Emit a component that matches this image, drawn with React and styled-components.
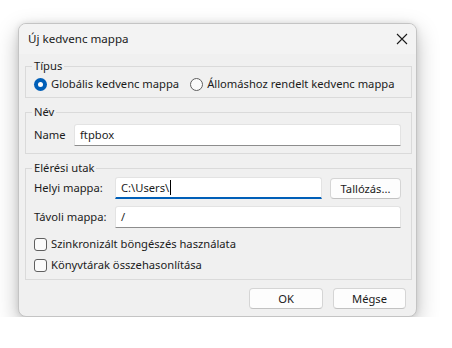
import React from "react";
import styled, { createGlobalStyle } from "styled-components";

const Global = createGlobalStyle`
  html, body {
    margin: 0;
    background: #ffffff;
  }
  body {
    font-family: "Noto Sans", "Open Sans", sans-serif;
    font-size: 11.2px;
    color: #1b1b1b;
  }
`;

const Page = styled.div`
  padding: 23px 0 0 18px;
`;

const Window = styled.div`
  width: 399px;
  height: 294px;
  box-sizing: border-box;
  background: #f0f0f0;
  border: 1px solid #c4c4c4;
  border-radius: 8px;
  box-shadow: 0 8px 22px rgba(0, 0, 0, 0.26), 0 0 6px rgba(0, 0, 0, 0.1);
  display: flex;
  flex-direction: column;
  overflow: hidden;
`;

const TitleBar = styled.div`
  height: 31px;
  display: flex;
  align-items: center;
  justify-content: space-between;
  padding: 0 7px 0 9px;
  background: #f3f3f3;
`;

const Title = styled.span`
  font-size: 11.6px;
  line-height: 16px;
  color: #1b1b1b;
`;

const CloseButton = styled.button`
  width: 14px;
  height: 14px;
  padding: 0;
  border: 0;
  background: transparent;
  display: flex;
  align-items: center;
  justify-content: center;
`;

const Content = styled.div`
  flex: 1;
  display: flex;
  flex-direction: column;
  gap: 6px;
  padding: 4px 4px 0 6px;
`;

const Group = styled.fieldset`
  margin: 0;
  padding: ${(p) => p.$top || 2}px 10px ${(p) => p.$bottom || 4}px 6px;
  border: 1px solid #dadada;
  border-radius: 0;
  min-width: 0;
`;

const Legend = styled.legend`
  padding: 0 2px;
  line-height: 16px;
  color: #1b1b1b;
`;

const RadioRow = styled.div`
  display: flex;
  align-items: center;
  gap: 11px;
  padding-left: 2px;
  height: 16px;
`;

const Choice = styled.label`
  display: flex;
  align-items: center;
  gap: 4px;
  white-space: nowrap;
  line-height: 16px;
`;

const RadioDot = styled.span`
  width: 13px;
  height: 13px;
  box-sizing: border-box;
  border-radius: 50%;
  flex: none;
  background: ${(p) => (p.$on ? "#005fb8" : "#fbfbfb")};
  border: ${(p) => (p.$on ? "0" : "1px solid #5f5f5f")};
  display: flex;
  align-items: center;
  justify-content: center;

  &::after {
    content: "";
    display: ${(p) => (p.$on ? "block" : "none")};
    width: 5px;
    height: 5px;
    border-radius: 50%;
    background: #ffffff;
  }
`;

const Box = styled.span`
  width: 13px;
  height: 13px;
  box-sizing: border-box;
  border: 1px solid #5f5f5f;
  border-radius: 3px;
  background: #fbfbfb;
  flex: none;
`;

const Field = styled.div`
  display: grid;
  grid-template-columns: ${(p) => p.$cols};
  row-gap: 7px;
  align-items: center;
  padding-left: 2px;
`;

const Label = styled.span`
  line-height: 16px;
  white-space: nowrap;
`;

const Input = styled.div`
  height: 22px;
  box-sizing: border-box;
  background: #ffffff;
  border: 1px solid #e3e3e3;
  border-bottom: ${(p) => (p.$focus ? "2px solid #005fb8" : "1px solid #8d8d8d")};
  border-radius: 3px 3px 0 0;
  padding: 0 5px;
  display: flex;
  align-items: center;
  line-height: 16px;
  grid-column: ${(p) => p.$span || "auto"};
`;

const Caret = styled.span`
  width: 1px;
  height: 15px;
  background: #000000;
  margin-left: 1px;
`;

const ButtonCell = styled.div`
  display: flex;
  justify-content: flex-end;
`;

const Button = styled.button`
  width: ${(p) => p.$w}px;
  height: 21px;
  box-sizing: border-box;
  background: #fdfdfd;
  border: 1px solid #d5d5d5;
  border-bottom-color: #c2c2c2;
  border-radius: 4px;
  font-family: inherit;
  font-size: 11.2px;
  color: #1b1b1b;
  padding: 0;
`;

const Checks = styled.div`
  display: flex;
  flex-direction: column;
  gap: 5px;
  padding: 8px 0 0 2px;
`;

const Footer = styled.div`
  display: flex;
  justify-content: flex-end;
  gap: 10px;
  padding: 8px 10px 7px 0;
`;

export default function App() {
  return (
    <>
      <Global />
      <Page>
        <Window>
          <TitleBar>
            <Title>Új kedvenc mappa</Title>
            <CloseButton aria-label="Bezárás">
              <svg width="12" height="12" viewBox="0 0 12 12">
                <path d="M1 1 L11 11 M11 1 L1 11" stroke="#1b1b1b" strokeWidth="1.1" />
              </svg>
            </CloseButton>
          </TitleBar>
          <Content>
            <Group $top={2} $bottom={5}>
              <Legend>Típus</Legend>
              <RadioRow>
                <Choice>
                  <RadioDot $on />
                  Globális kedvenc mappa
                </Choice>
                <Choice>
                  <RadioDot />
                  Állomáshoz rendelt kedvenc mappa
                </Choice>
              </RadioRow>
            </Group>
            <Group $top={4} $bottom={7}>
              <Legend>Név</Legend>
              <Field $cols="40px 1fr">
                <Label>Name</Label>
                <Input>ftpbox</Input>
              </Field>
            </Group>
            <Group $top={1} $bottom={6}>
              <Legend>Elérési utak</Legend>
              <Field $cols="81px 1fr 79px">
                <Label>Helyi mappa:</Label>
                <Input $focus>
                  C:\Users\
                  <Caret />
                </Input>
                <ButtonCell>
                  <Button $w={71}>Tallózás...</Button>
                </ButtonCell>
                <Label>Távoli mappa:</Label>
                <Input $span="2 / 4">/</Input>
              </Field>
              <Checks>
                <Choice>
                  <Box />
                  Szinkronizált böngészés használata
                </Choice>
                <Choice>
                  <Box />
                  Könyvtárak összehasonlítása
                </Choice>
              </Checks>
            </Group>
          </Content>
          <Footer>
            <Button $w={74}>OK</Button>
            <Button $w={73}>Mégse</Button>
          </Footer>
        </Window>
      </Page>
    </>
  );
}
